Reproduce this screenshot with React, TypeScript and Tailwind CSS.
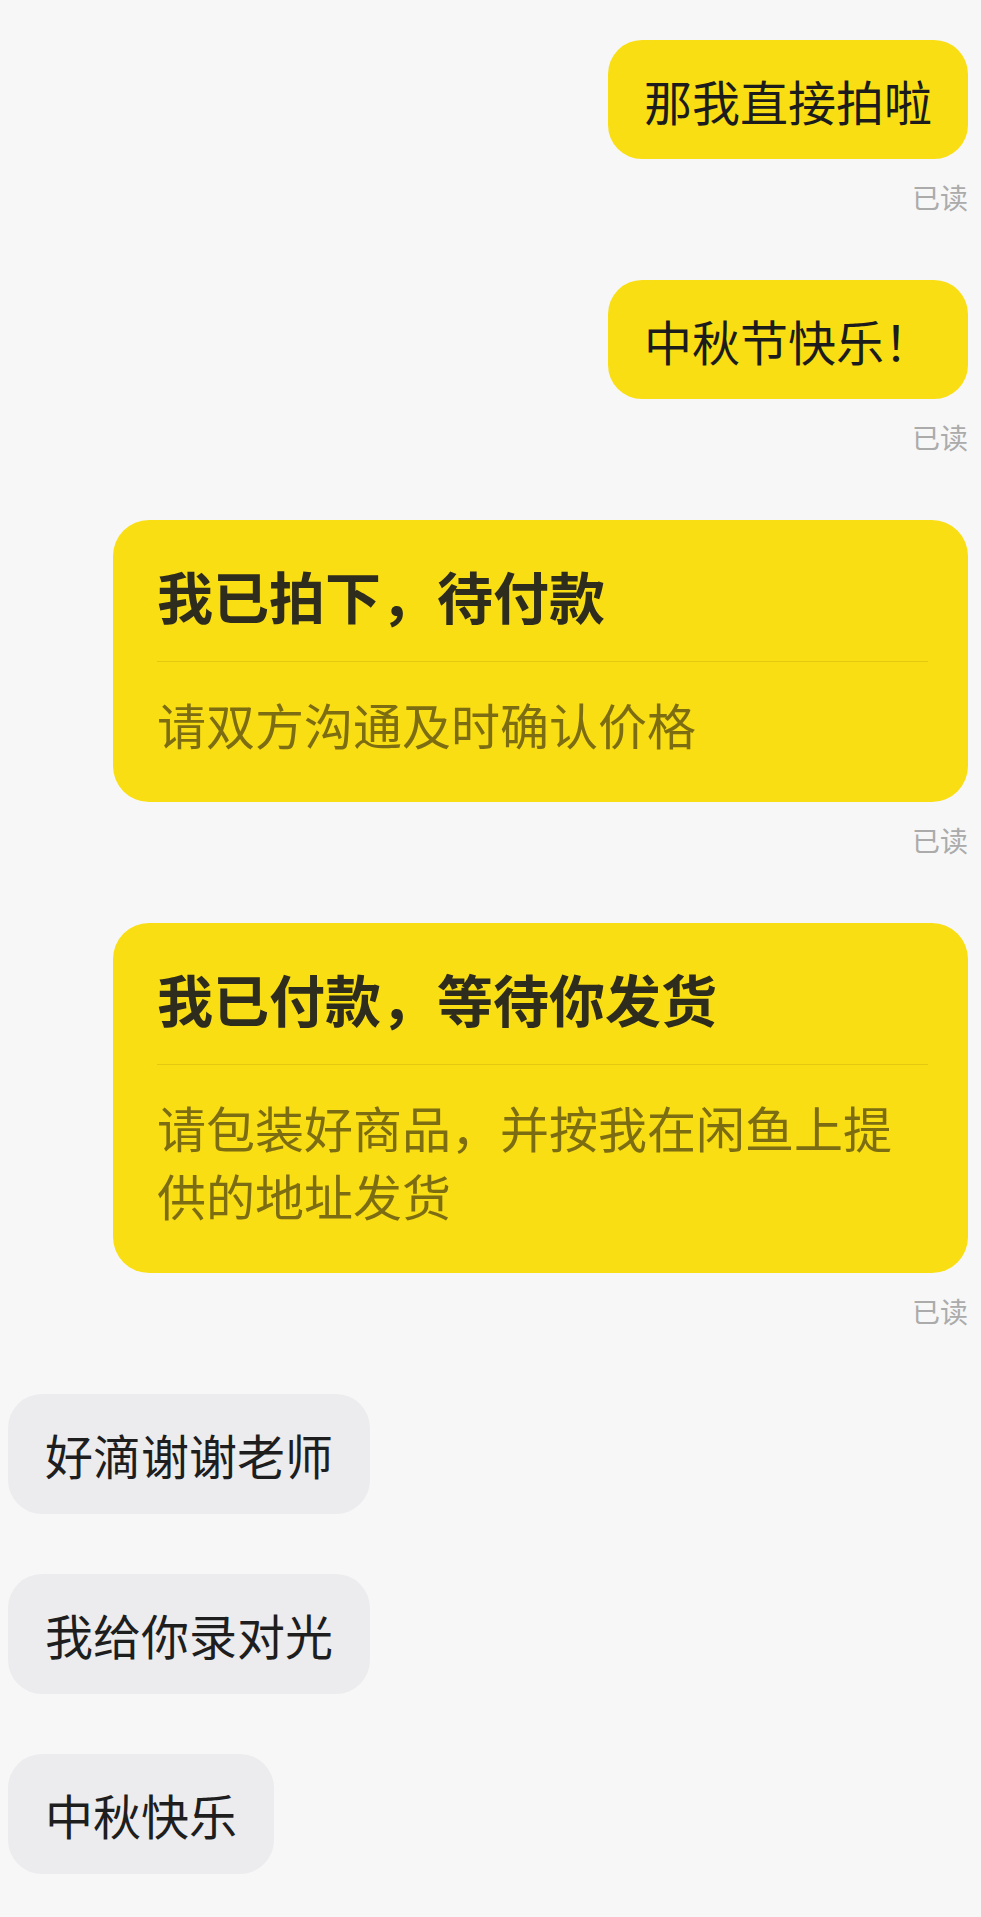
import React from "react";

const font = "font-['Noto_Sans_CJK_SC','Noto_Sans',sans-serif]";

function Read() {
  return (
    <div className="flex justify-end mt-[24px] mb-[69px]">
      <span className="text-[28px] leading-[28px] text-[#ababab]">已读</span>
    </div>
  );
}

function MyBubble({ text }: { text: string }) {
  return (
    <div className="flex justify-end">
      <div className="bg-[#f9de14] rounded-[34px] px-[36px] h-[119px] flex items-center text-[48px] leading-[60px] text-[#1c1c1c] whitespace-nowrap">
        {text}
      </div>
    </div>
  );
}

function OrderCard({ title, note }: { title: string; note: string }) {
  return (
    <div className="flex justify-end">
      <div className="bg-[#f9de14] rounded-[36px] w-[855px] pl-[44px] pr-[40px] pt-[41px] pb-[44px]">
        <div className="text-[56px] leading-[68px] font-bold text-[#2e2c1c] mb-[32px]">{title}</div>
        <div className="h-px bg-[#e4c912]" />
        <div className="mt-[28px] pr-[4px] text-[49px] leading-[68px] text-[#7d6d12]">{note}</div>
      </div>
    </div>
  );
}

function TheirBubble({ text }: { text: string }) {
  return (
    <div className="flex">
      <div className="bg-[#ececee] rounded-[34px] px-[37px] h-[120px] flex items-center text-[48px] leading-[60px] text-[#1e1e1e] whitespace-nowrap">
        {text}
      </div>
    </div>
  );
}

export default function App() {
  return (
    <div className={`${font} bg-[#f7f7f7] min-h-[1917px] pt-[40px] pl-[8px] pr-[13px]`}>
      <MyBubble text="那我直接拍啦" />
      <Read />
      <MyBubble text="中秋节快乐！" />
      <Read />
      <OrderCard title="我已拍下，待付款" note="请双方沟通及时确认价格" />
      <Read />
      <OrderCard title="我已付款，等待你发货" note="请包装好商品，并按我在闲鱼上提供的地址发货" />
      <Read />
      <div className="flex flex-col gap-[60px] mt-[1px]">
        <TheirBubble text="好滴谢谢老师" />
        <TheirBubble text="我给你录对光" />
        <TheirBubble text="中秋快乐" />
      </div>
    </div>
  );
}
